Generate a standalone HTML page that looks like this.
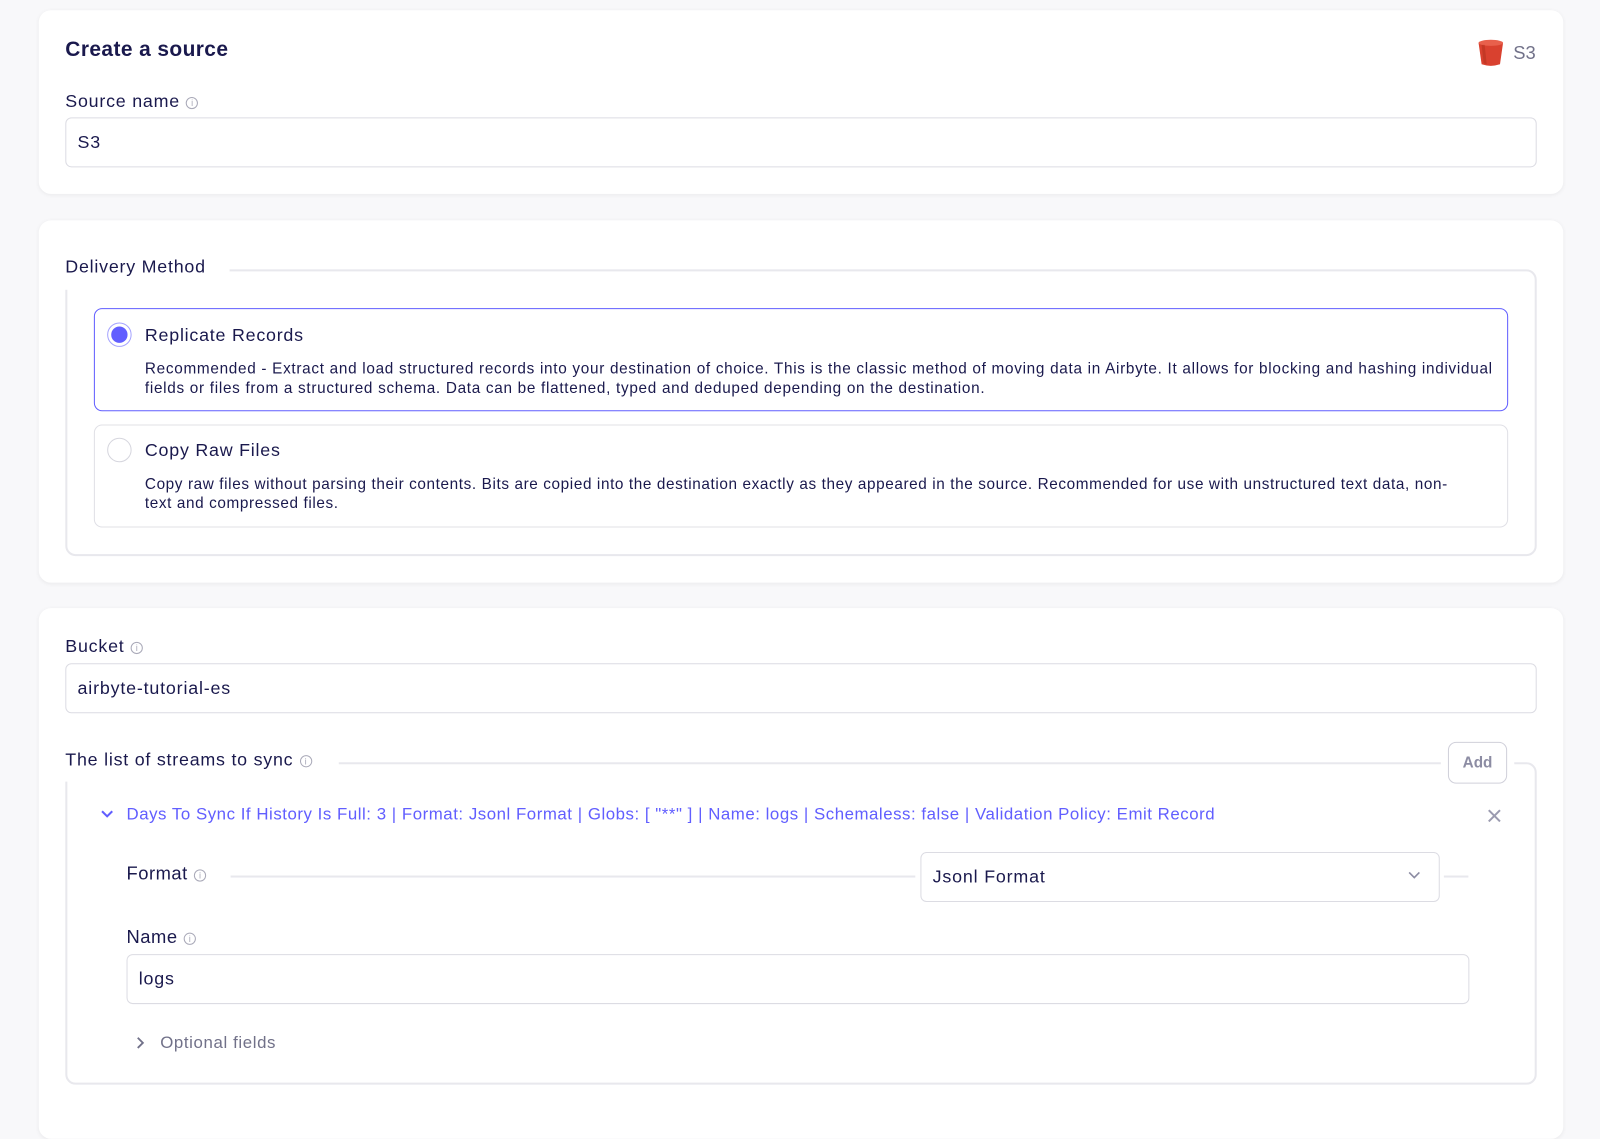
<!DOCTYPE html>
<html><head><meta charset="utf-8"><style>
*{box-sizing:border-box;margin:0;padding:0}
body{width:1600px;height:1099px;background:#f8f8fa;font-family:"Liberation Sans",sans-serif;color:#1a194d;position:relative;overflow:hidden}
#w{position:absolute;left:0;top:0;width:1568px;height:1077px;transform:scale(1.0204);transform-origin:0 0}
.a{position:absolute;white-space:nowrap}
.t{margin-top:3px}
.card{position:absolute;left:38px;width:1494px;background:#fff;border-radius:12px;box-shadow:0 1px 4px rgba(0,0,0,.06)}
.lbl{font-size:17.5px;letter-spacing:.75px}
.inp{position:absolute;border:1px solid #dcdce3;border-radius:6px;background:#fff;font-size:17.5px;padding-left:11px;display:flex;align-items:center;letter-spacing:.8px}
.info{display:inline-block;width:12px;height:12px;border:1px solid #a9a9b8;border-radius:50%;font-size:9px;color:#a9a9b8;text-align:center;line-height:11px;vertical-align:1px;margin-left:6px;letter-spacing:0}
.fs{position:absolute;border:2px solid #e8e8ed;border-radius:10px}
.hl{position:absolute;height:2px;background:#e8e8ed}
.desc{font-size:15px;line-height:19px;letter-spacing:.69px}
</style></head><body><div id="w">
<div class="card" style="top:10px;height:180px"></div>
<div class="card" style="top:216px;height:355px"></div>
<div class="card" style="top:596px;height:520px"></div>

<div class="a t" style="left:64px;top:34px;font-size:20.5px;font-weight:bold;letter-spacing:.4px">Create a source</div>
<svg class="a" style="left:1448px;top:38px" width="26" height="27" viewBox="0 0 26 27"><path d="M1 4 L25 4 L22 25 Q13 28 4 25 Z" fill="#d9412f"/><ellipse cx="13" cy="4" rx="12" ry="3" fill="#e8604c"/><path d="M4 6 L6 24 L9 25 L7 6Z" fill="#b5321f" opacity=".6"/></svg>
<div class="a t" style="left:1483px;top:39px;font-size:18px;color:#717189">S3</div>
<div class="a lbl t" style="left:64px;top:86px">Source name<span class="info">i</span></div>
<div class="inp" style="left:64px;top:115px;width:1442px;height:49px">S3</div>

<div class="fs" style="left:64px;top:264px;width:1442px;height:281px"></div>
<div class="a" style="left:58px;top:250px;width:167px;height:34px;background:#fff"></div>
<div class="a lbl t" style="left:64px;top:248px">Delivery Method</div>

<div class="a" style="left:92px;top:302px;width:1386px;height:101px;border:1px solid #615eff;border-radius:8px"></div>
<div class="a" style="left:105px;top:316px;width:24px;height:24px;border:1px solid #a5a3ff;border-radius:50%"></div>
<div class="a" style="left:109px;top:320px;width:16px;height:16px;background:#615eff;border-radius:50%"></div>
<div class="a lbl t" style="left:142px;top:315px">Replicate Records</div>
<div class="a desc t" style="left:142px;top:349px">Recommended - Extract and load structured records into your destination of choice. This is the classic method of moving data in Airbyte. It allows for blocking and hashing individual<br>fields or files from a structured schema. Data can be flattened, typed and deduped depending on the destination.</div>

<div class="a" style="left:92px;top:416px;width:1386px;height:101px;border:1px solid #e0e0e6;border-radius:8px"></div>
<div class="a" style="left:105px;top:429px;width:24px;height:24px;border:1px solid #d6d6de;border-radius:50%"></div>
<div class="a lbl t" style="left:142px;top:428px">Copy Raw Files</div>
<div class="a desc t" style="left:142px;top:462px;letter-spacing:.6px">Copy raw files without parsing their contents. Bits are copied into the destination exactly as they appeared in the source. Recommended for use with unstructured text data, non-<br>text and compressed files.</div>

<div class="a lbl t" style="left:64px;top:620px">Bucket<span class="info">i</span></div>
<div class="inp" style="left:64px;top:650px;width:1442px;height:49px">airbyte-tutorial-es</div>

<div class="fs" style="left:64px;top:747px;width:1442px;height:316px"></div>
<div class="a" style="left:58px;top:730px;width:274px;height:36px;background:#fff"></div>
<div class="a" style="left:1412px;top:724px;width:72px;height:46px;background:#fff"></div>
<div class="a lbl t" style="left:64px;top:731px">The list of streams to sync<span class="info">i</span></div>
<div class="a" style="left:1419px;top:727px;width:58px;height:41px;border:1px solid #d0d0da;border-radius:8px;font-size:15px;font-weight:bold;color:#8c8ca3;text-align:center;line-height:39px">Add</div>

<svg class="a" style="left:98px;top:792px" width="14" height="12"><path d="M2 3 L7 8 L12 3" fill="none" stroke="#615eff" stroke-width="2"/></svg>
<div class="a t" style="left:124px;top:786px;font-size:16.5px;color:#615eff;letter-spacing:.52px">Days To Sync If History Is Full: 3 | Format: Jsonl Format | Globs: [ "**" ] | Name: logs | Schemaless: false | Validation Policy: Emit Record</div>
<svg class="a" style="left:1457px;top:792px" width="15" height="15"><path d="M2 2 L13 13 M13 2 L2 13" stroke="#9b9bb0" stroke-width="2"/></svg>

<div class="a lbl t" style="left:124px;top:843px;font-size:18px;letter-spacing:.5px">Format<span class="info">i</span></div>
<div class="hl" style="left:226px;top:858px;width:671px"></div>
<div class="inp" style="left:902px;top:835px;width:509px;height:49px">Jsonl Format</div>
<svg class="a" style="left:1379px;top:853px" width="14" height="10"><path d="M2 2 L7 7 L12 2" fill="none" stroke="#8c8ca3" stroke-width="1.6"/></svg>
<div class="hl" style="left:1415px;top:858px;width:24px"></div>

<div class="a lbl t" style="left:124px;top:905px;font-size:18px;letter-spacing:.5px">Name<span class="info">i</span></div>
<div class="inp" style="left:124px;top:935px;width:1316px;height:49px">logs</div>
<svg class="a" style="left:132px;top:1015px" width="10" height="14"><path d="M3 2 L8 7 L3 12" fill="none" stroke="#717189" stroke-width="1.8"/></svg>
<div class="a t" style="left:157px;top:1010px;font-size:16.5px;color:#717189;letter-spacing:.6px">Optional fields</div>
</div></body></html>
